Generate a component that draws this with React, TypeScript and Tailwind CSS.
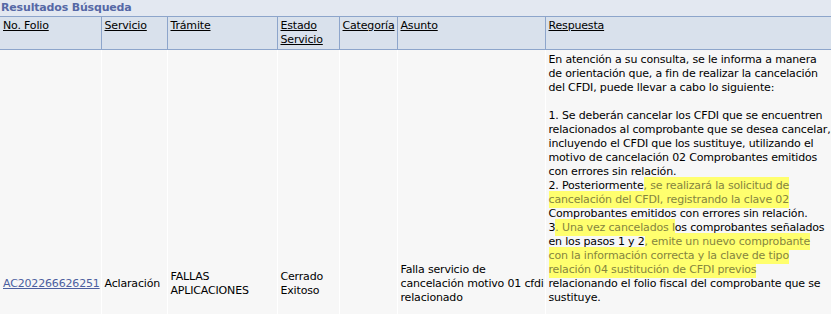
import React from "react";

const H = ({ children }: { children: React.ReactNode }) => (
  <span className="bg-[#ffff6e] text-[#85853f] py-[2px]">{children}</span>
);

const cols = [101, 66, 110, 62, 58, 148, 286];
const heads: React.ReactNode[] = [
  "No. Folio",
  "Servicio",
  "Trámite",
  <>Estado<br />Servicio</>,
  "Categoría",
  "Asunto",
  "Respuesta",
];

const font = { fontFamily: "'DejaVu Sans', Verdana, sans-serif", fontSize: "11px", lineHeight: "14px", letterSpacing: "-0.17px" } as const;

export default function App() {
  return (
    <div
      className="w-[831px] h-[314px] overflow-hidden bg-[#f7f7f7] text-[11px] leading-[14px] text-black"
      style={font}
    >
      <div className="h-[16px] bg-[#e3e8f1] font-bold text-[#5668a6] leading-[16px] pl-[1px]">
        Resultados Búsqueda
      </div>
      <table className="table-fixed border-collapse w-[831px] text-[11px] leading-[14px] text-black" style={font}>
        <colgroup>
          {cols.map((w, i) => (
            <col key={i} style={{ width: w }} />
          ))}
        </colgroup>
        <thead>
          <tr className="bg-[#d9e1ec]">
            {heads.map((h, i) => (
              <th
                key={i}
                className={`h-[33px] font-normal text-left align-top px-[3px] pt-[2px] border-y border-[#8da5cb] ${i > 0 ? "border-l" : ""}`}
              >
                <span className="underline">{h}</span>
              </th>
            ))}
          </tr>
        </thead>
        <tbody>
          <tr className="h-[468px]">
            <td className="align-middle px-[3px] border-r border-white">
              <span className="underline text-[#4c5fa0]">AC202266626251</span>
            </td>
            <td className="align-middle px-[3px] border-r border-white">Aclaración</td>
            <td className="align-middle px-[3px] border-r border-white">FALLAS<br />APLICACIONES</td>
            <td className="align-middle px-[3px] border-r border-white">Cerrado<br />Exitoso</td>
            <td className="align-middle px-[3px] border-r border-white"></td>
            <td className="align-middle px-[3px] border-r border-white whitespace-nowrap">
              Falla servicio de<br />cancelación motivo 01 cfdi<br />relacionado
            </td>
            <td className="align-top px-[3px] pt-[3px] whitespace-nowrap">
              En atención a su consulta, se le informa a manera<br />
              de orientación que, a fin de realizar la cancelación<br />
              del CFDI, puede llevar a cabo lo siguiente:<br />
              <br />
              1. Se deberán cancelar los CFDI que se encuentren<br />
              relacionados al comprobante que se desea cancelar,<br />
              incluyendo el CFDI que los sustituye, utilizando el<br />
              motivo de cancelación 02 Comprobantes emitidos<br />
              con errores sin relación.<br />
              2. Posteriormente<H>, se realizará la solicitud de</H><br />
              <H>cancelación del CFDI, registrando la clave 02</H><br />
              Comprobantes emitidos con errores sin relación.<br />
              3<H>. Una vez cancelados l</H>os comprobantes señalados<br />
              en los pasos 1 y 2<H>, emite un nuevo comprobante</H><br />
              <H>con la información correcta y la clave de tipo</H><br />
              <H>relación 04 sustitución de CFDI previos</H><br />
              relacionando el folio fiscal del comprobante que se<br />
              sustituye.
            </td>
          </tr>
        </tbody>
      </table>
    </div>
  );
}
